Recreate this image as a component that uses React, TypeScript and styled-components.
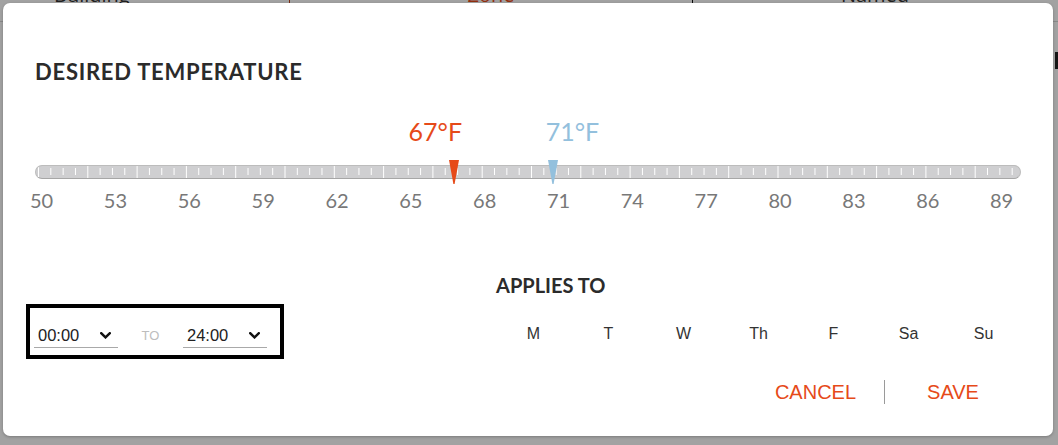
import React from "react";
import styled, { createGlobalStyle } from "styled-components";

const ORANGE = "#e64a19";
const BLUE = "#93c0dd";

const GlobalStyle = createGlobalStyle`
  html, body { margin: 0; padding: 0; }
  body {
    width: 1058px;
    height: 445px;
    overflow: hidden;
    background: #ffffff;
    font-family: "Liberation Sans", Arial, sans-serif;
  }
`;

const Page = styled.div`
  position: relative;
  width: 1058px;
  height: 445px;
  overflow: hidden;
  background: #ffffff;
`;

const BgHeader = styled.div`
  display: flex;
  height: 21px;
  border-bottom: 1px solid #d6d6d6;
  font-family: "Open Sans", sans-serif;
  font-size: 20px;
  color: #333;
`;

const BgCell = styled.div<{ $w: number; $line?: string; $color?: string; $align?: string }>`
  width: ${(p) => p.$w}px;
  flex: none;
  box-sizing: border-box;
  border-right: 1px solid ${(p) => p.$line ?? "transparent"};
  color: ${(p) => p.$color ?? "#333"};
  text-align: ${(p) => p.$align ?? "left"};
  padding-left: ${(p) => (p.$align === "left" ? 54 : 0)}px;
  line-height: 20px;
  margin-top: -15px;
  height: 36px;
`;

const BgToolbar = styled.div`
  display: flex;
  justify-content: flex-end;
  margin-top: 30px;
`;

const BgButton = styled.div`
  width: 30px;
  height: 17px;
  margin-right: -27px;
  background: #222;
`;

const Overlay = styled.div`
  position: absolute;
  inset: 0;
  background: rgba(0, 0, 0, 0.365);
`;

const Modal = styled.div`
  position: absolute;
  top: 3px;
  left: 3px;
  width: 1050px;
  height: 433px;
  box-sizing: border-box;
  padding: 56px 32px 0 32px;
  background: #ffffff;
  border-radius: 7px;
  box-shadow: 0 1px 3px rgba(0, 0, 0, 0.25);
  display: flex;
  flex-direction: column;
`;

const Title = styled.h2`
  margin: 0;
  font-family: Lato, sans-serif;
  font-weight: 700;
  font-size: 22px;
  line-height: 26px;
  color: #2b2b2b;
  letter-spacing: 0.75px;
`;

const SliderBlock = styled.div`
  margin-top: 31px;
  width: 986px;
  display: flex;
  flex-direction: column;
`;

const ValueRow = styled.div`
  position: relative;
  height: 30px;
`;

const ValueLabel = styled.span<{ $color: string; $anchor: "left" | "right" }>`
  position: absolute;
  top: 0;
  font-family: Lato, sans-serif;
  font-size: 25px;
  line-height: 30px;
  color: ${(p) => p.$color};
  white-space: nowrap;
  transform: ${(p) => (p.$anchor === "right" ? "translateX(-100%)" : "none")};
`;

const TrackWrap = styled.div`
  position: relative;
  margin-top: 19px;
  height: 14px;
`;

const Track = styled.div`
  height: 14px;
  box-sizing: border-box;
  background: #cfcfd1;
  border: 1px solid #bcbcbc;
  border-bottom-color: #a6a6a6;
  border-radius: 7px;
  overflow: hidden;
`;

const Marker = styled.svg`
  position: absolute;
  top: -5px;
  width: 10px;
  height: 24px;
`;

const ScaleRow = styled.div`
  margin-top: 9px;
  margin-left: -5px;
  width: 982px;
  display: flex;
  justify-content: space-between;
`;

const ScaleLabel = styled.span`
  width: 22px;
  text-align: center;
  font-family: Lato, sans-serif;
  font-size: 20px;
  line-height: 24px;
  color: #787878;
`;

const Bottom = styled.div`
  margin-top: 61px;
  display: flex;
  align-items: flex-start;
`;

const TimeBox = styled.div`
  margin-left: -9px;
  margin-top: 31px;
  width: 258px;
  height: 55px;
  box-sizing: border-box;
  border: 4px solid #000;
  padding: 18px 13px 0 4px;
  display: flex;
  align-items: flex-start;
`;

const TimeSelect = styled.div`
  width: 84px;
  box-sizing: border-box;
  padding: 0 7px 3px 4px;
  border-bottom: 1px solid #a9a9a9;
  display: flex;
  align-items: center;
  justify-content: space-between;
  font-size: 16.5px;
  line-height: 18px;
  color: #222;
`;

const ToLabel = styled.span`
  width: 65px;
  text-align: center;
  font-size: 13px;
  line-height: 20px;
  color: #bdbdbd;
`;

const RightCol = styled.div`
  margin-left: auto;
  width: 525px;
  display: flex;
  flex-direction: column;
`;

const SectionLabel = styled.div`
  font-family: Lato, sans-serif;
  font-weight: 700;
  font-size: 20px;
  line-height: 24px;
  color: #2b2b2b;
`;

const DaysRow = styled.div`
  margin-top: 27px;
  display: grid;
  grid-template-columns: repeat(7, 75px);
`;

const Day = styled.span`
  text-align: center;
  font-size: 16px;
  line-height: 20px;
  color: #333;
`;

const Actions = styled.div`
  margin-top: 36px;
  display: flex;
  justify-content: flex-end;
`;

const ActionButton = styled.button<{ $divider?: boolean }>`
  width: 137px;
  height: 24px;
  padding: 0;
  margin: 0;
  border: none;
  border-left: ${(p) => (p.$divider ? "1px solid #9a9a9a" : "none")};
  background: transparent;
  font-family: "Liberation Sans", Arial, sans-serif;
  font-size: 20px;
  line-height: 24px;
  color: ${ORANGE};
  cursor: pointer;
`;

const Chevron = () => (
  <svg width="11" height="7" viewBox="0 0 11 7" fill="none">
    <path d="M1.2 1.2 L5.5 5.4 L9.8 1.2" stroke="#111" strokeWidth="2.4" strokeLinecap="square" />
  </svg>
);

const TRACK_W = 986;
const MIN = 50;
const MAX = 90;
const pos = (v: number) => ((v - MIN) / (MAX - MIN)) * TRACK_W;

const Ticks = () => {
  const step = TRACK_W / 80;
  const lines: React.ReactNode[] = [];
  for (let i = 0; i < 81; i++) {
    const x = 2.5 + i * step;
    if (x > TRACK_W - 4) break;
    const major = i % 4 === 0;
    lines.push(
      <line
        key={i}
        x1={x}
        x2={x}
        y1={major ? 0 : 2}
        y2={major ? 12 : 9}
        stroke="#ffffff"
        strokeWidth={1}
      />
    );
  }
  return (
    <svg width={TRACK_W - 2} height={12} style={{ display: "block" }}>
      {lines}
    </svg>
  );
};

const scale = [50, 53, 56, 59, 62, 65, 68, 71, 74, 77, 80, 83, 86, 89];
const days = ["M", "T", "W", "Th", "F", "Sa", "Su"];

export default function App() {
  const low = 67;
  const high = 71;
  return (
    <Page>
      <GlobalStyle />
      <BgHeader>
        <BgCell $w={290} $line="#c0461c" $align="left" $color="#333">Building</BgCell>
        <BgCell $w={403} $line="#111" $align="center" $color={ORANGE}>Zone</BgCell>
        <BgCell $w={365} $align="center" $color="#333">Named</BgCell>
      </BgHeader>
      <BgToolbar>
        <BgButton />
      </BgToolbar>
      <Overlay />
      <Modal>
        <Title>DESIRED TEMPERATURE</Title>
        <SliderBlock>
          <ValueRow>
            <ValueLabel $color={ORANGE} $anchor="right" style={{ left: pos(low) + 8 }}>
              {low}°F
            </ValueLabel>
            <ValueLabel $color={BLUE} $anchor="left" style={{ left: pos(high) - 7 }}>
              {high}°F
            </ValueLabel>
          </ValueRow>
          <TrackWrap>
            <Track>
              <Ticks />
            </Track>
            <Marker viewBox="0 0 10 24" style={{ left: pos(low) - 5 }}>
              <polygon points="0,0 10,0 5.6,24 4.4,24" fill={ORANGE} />
            </Marker>
            <Marker viewBox="0 0 10 24" style={{ left: pos(high) - 5 }}>
              <polygon points="0,0 10,0 5.6,24 4.4,24" fill={BLUE} />
            </Marker>
          </TrackWrap>
          <ScaleRow>
            {scale.map((n) => (
              <ScaleLabel key={n}>{n}</ScaleLabel>
            ))}
          </ScaleRow>
        </SliderBlock>
        <Bottom>
          <TimeBox>
            <TimeSelect>
              <span>00:00</span>
              <Chevron />
            </TimeSelect>
            <ToLabel>TO</ToLabel>
            <TimeSelect>
              <span>24:00</span>
              <Chevron />
            </TimeSelect>
          </TimeBox>
          <RightCol>
            <SectionLabel>APPLIES TO</SectionLabel>
            <DaysRow>
              {days.map((d) => (
                <Day key={d}>{d}</Day>
              ))}
            </DaysRow>
            <Actions>
              <ActionButton>CANCEL</ActionButton>
              <ActionButton $divider>SAVE</ActionButton>
            </Actions>
          </RightCol>
        </Bottom>
      </Modal>
    </Page>
  );
}
